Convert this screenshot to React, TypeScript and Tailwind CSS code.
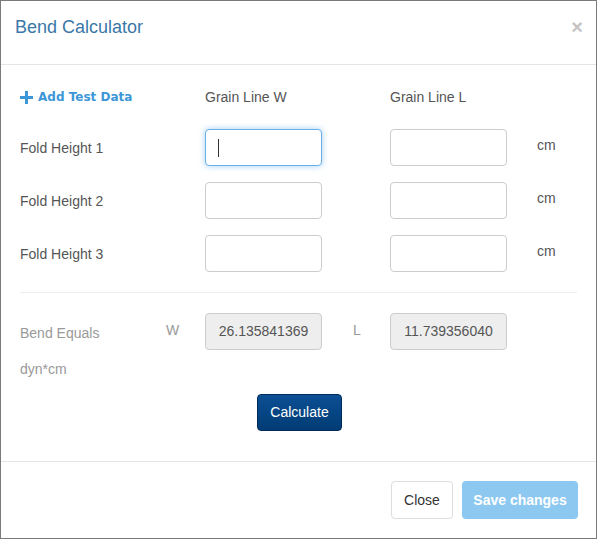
const rows = ["Fold Height 1", "Fold Height 2", "Fold Height 3"];

function TextBox({ focused }: { focused?: boolean }) {
  return (
    <div
      className={
        focused
          ? "flex h-[37px] w-[117px] items-center rounded-[4px] border border-[#66afe9] bg-white pl-3 shadow-[0_0_6px_rgba(102,175,233,0.6)]"
          : "h-[37px] w-[117px] rounded-[4px] border border-[#ccc] bg-white"
      }
    >
      {focused && <span className="h-[18px] w-px bg-[#333]" />}
    </div>
  );
}

function ReadOnlyBox({ value }: { value: string }) {
  return (
    <div className="flex h-[37px] w-[117px] items-center justify-center rounded-[4px] border border-[#ccc] bg-[#eee] text-[14px] text-[#555]">
      {value}
    </div>
  );
}

export default function App() {
  return (
    <div className="flex h-[539px] w-[597px] flex-col border border-[#7a7a7a] bg-white font-['Liberation_Sans',Arial,sans-serif] text-[14px] text-[#555]">
      <div className="flex h-[64px] items-start justify-between border-b border-[#e5e5e5] pl-[14px] pr-[13px] pt-[13px]">
        <h4 className="text-[18px] text-[#3b78a8]">Bend Calculator</h4>
        <span className="mt-[-2px] text-[20px] font-bold text-[#c4c4c4]">×</span>
      </div>

      <div className="flex flex-col px-[19px]">
        <div className="flex h-[64px] items-center">
          <button className="flex w-[185px] items-center gap-[5px] font-['DejaVu_Sans',Verdana,sans-serif] text-[12px] font-bold text-[#3c96d8]">
            <svg width="13" height="13" viewBox="0 0 13 13">
              <path d="M5 0h3v5h5v3H8v5H5V8H0V5h5z" fill="#3c96d8" />
            </svg>
            Add Test Data
          </button>
          <span className="w-[185px]">Grain Line W</span>
          <span>Grain Line L</span>
        </div>

        <div className="flex flex-col gap-4">
          {rows.map((label, i) => (
            <div key={label} className="flex items-center">
              <span className="w-[185px] pt-[2px]">{label}</span>
              <div className="w-[185px]">
                <TextBox focused={i === 0} />
              </div>
              <TextBox />
              <span className="ml-[30px] mt-[-4px]">cm</span>
            </div>
          ))}
        </div>

        <div className="mt-5 border-t border-[#eee]" />

        <div className="mt-5 flex items-start">
          <span className="w-[146px] pt-[10px] text-[#999]">Bend Equals</span>
          <span className="w-[39px] pt-[7px] text-[#999]">W</span>
          <ReadOnlyBox value="26.135841369" />
          <span className="ml-[31px] w-[37px] pt-[7px] text-[#999]">L</span>
          <ReadOnlyBox value="11.739356040" />
        </div>
        <span className="mt-[9px] text-[#999]">dyn*cm</span>

        <div className="mt-[14px] flex justify-center pl-[2px]">
          <button className="h-[37px] w-[85px] rounded-[4px] border border-[#002a5c] bg-gradient-to-b from-[#0d4f94] to-[#013c75] text-[14px] text-white">
            Calculate
          </button>
        </div>
      </div>

      <div className="mt-auto flex h-[77px] items-center justify-end gap-[9px] border-t border-[#e5e5e5] pr-[18px]">
        <button className="h-[38px] w-[62px] rounded-[4px] border border-[#ddd] bg-white text-[14px] text-[#333]">
          Close
        </button>
        <button className="h-[38px] w-[116px] rounded-[4px] bg-[#8dc8f0] text-[14px] font-bold text-white">
          Save changes
        </button>
      </div>
    </div>
  );
}
